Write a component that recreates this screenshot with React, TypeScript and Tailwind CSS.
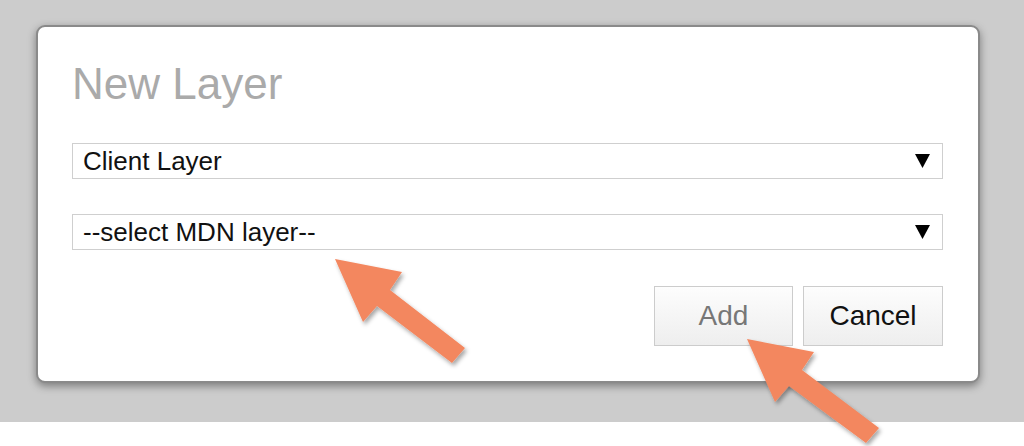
import React from "react";

function Caret() {
  return (
    <svg width="15" height="14" viewBox="0 0 15 14" className="block">
      <polygon points="0,0 15,0 7.5,14" fill="#000" />
    </svg>
  );
}

function FakeSelect({ label }: { label: string }) {
  return (
    <div className="flex h-[36px] w-[871px] items-center justify-between border border-[#cfcfcf] bg-white pl-[10px] pr-[12px]">
      <span className="text-[26px] leading-none text-[#111]">{label}</span>
      <Caret />
    </div>
  );
}

export default function App() {
  return (
    <div
      className="relative h-[446px] w-[1024px] overflow-hidden bg-white"
      style={{ fontFamily: '"Liberation Sans", Arial, sans-serif' }}
    >
      <div className="h-[422px] bg-[#cccccc] pl-[36px] pt-[25px]">
        <div className="h-[358px] w-[944px] rounded-[9px] border-2 border-[#8a8a8a] bg-white pl-[34px] pt-[35px] shadow-[0_3px_8px_rgba(0,0,0,0.4)]">
          <h1 className="text-[44px] leading-[44px] text-[#aaaaaa]">New Layer</h1>
          <div className="mt-[37px]">
            <FakeSelect label="Client Layer" />
          </div>
          <div className="mt-[35px]">
            <FakeSelect label="--select MDN layer--" />
          </div>
          <div className="mt-[36px] flex w-[871px] justify-end gap-[10px]">
            <button className="h-[60px] w-[139px] border border-[#cccccc] bg-gradient-to-b from-[#fdfdfd] to-[#eeeeee] text-[28px] leading-none text-[#777777]">
              Add
            </button>
            <button className="h-[60px] w-[140px] border border-[#cccccc] bg-gradient-to-b from-[#fdfdfd] to-[#eeeeee] text-[28px] leading-none text-[#111]">
              Cancel
            </button>
          </div>
        </div>
      </div>
      <svg
        className="pointer-events-none absolute left-0 top-0"
        width="1024"
        height="446"
        viewBox="0 0 1024 446"
      >
        <defs>
          <filter id="sh" x="-20%" y="-20%" width="140%" height="140%">
            <feDropShadow dx="2" dy="3" stdDeviation="2" floodColor="#000" floodOpacity="0.35" />
          </filter>
        </defs>
        <polygon
          points="335,259 402,272 390,290 465,348 452,363 377,306 363,322"
          fill="#f3875f"
          filter="url(#sh)"
        />
        <polygon
          points="747,339 814,352 802,370 879,428 866,443 789,386 775,402"
          fill="#f3875f"
          filter="url(#sh)"
        />
      </svg>
    </div>
  );
}
